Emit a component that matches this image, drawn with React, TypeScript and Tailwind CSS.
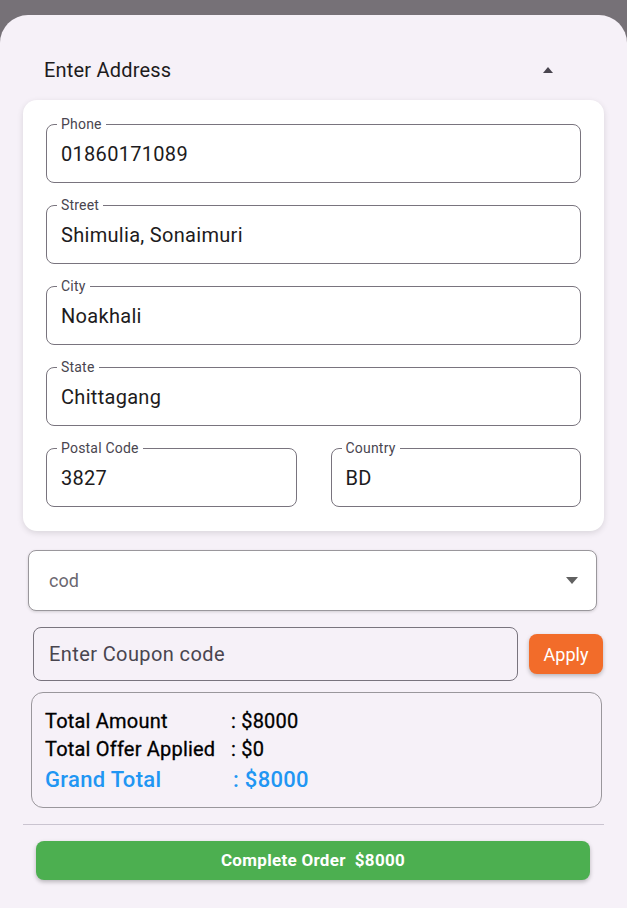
import React from 'react';

const font = { fontFamily: 'Roboto, "Noto Sans", sans-serif' };

function Field({ label, value, className = '' }: { label: string; value: string; className?: string }) {
    return (
        <div className={`relative h-[59px] rounded-[8px] border border-[#79747e] flex items-center pl-[14px] ${className}`}>
            <span className="absolute -top-[10px] left-[10px] px-[4px] bg-white text-[14px] leading-[18px] text-[#49454f] tracking-[0.2px]">
                {label}
            </span>
            <span className="text-[20px] text-[#1d1b20] tracking-[0.3px]">{value}</span>
        </div>
    );
}

export default function App() {
    return (
        <div className="w-[627px] h-[908px] bg-[#767177] pt-[15px] overflow-hidden" style={font}>
            <div className="h-full bg-[#f6f1f8] rounded-t-[28px] flex flex-col">
                {/* header */}
                <div className="mt-[27px] h-[56px] flex items-center justify-between pl-[44px] pr-[74px]">
                    <span className="text-[20px] text-[#1d1b20] tracking-[0.2px]">Enter Address</span>
                    <svg width="10" height="6" viewBox="0 0 10 6">
                        <path d="M0 6 L5 0 L10 6 Z" fill="#49454f" />
                    </svg>
                </div>

                {/* address card */}
                <div className="mx-[23px] mt-[2px] bg-white rounded-[14px] shadow-[0_2px_6px_rgba(0,0,0,0.12)] px-[23px] pt-[24px] pb-[24px] flex flex-col gap-[22px]">
                    <Field label="Phone" value="01860171089" />
                    <Field label="Street" value="Shimulia, Sonaimuri" />
                    <Field label="City" value="Noakhali" />
                    <Field label="State" value="Chittagang" />
                    <div className="flex gap-[34px]">
                        <Field label="Postal Code" value="3827" className="flex-1" />
                        <Field label="Country" value="BD" className="flex-1" />
                    </div>
                </div>

                {/* payment dropdown */}
                <div className="ml-[28px] mr-[30px] mt-[19px] h-[61px] bg-white rounded-[8px] border border-[#9a979c] shadow-[0_1px_3px_rgba(0,0,0,0.15)] flex items-center justify-between pl-[20px] pr-[18px]">
                    <span className="text-[18px] text-[#6b6870]">cod</span>
                    <svg width="12" height="7" viewBox="0 0 12 7">
                        <path d="M0 0 L12 0 L6 7 Z" fill="#616161" />
                    </svg>
                </div>

                {/* coupon */}
                <div className="ml-[33px] mr-[24px] mt-[16px] flex items-center gap-[11px]">
                    <div className="flex-1 h-[54px] rounded-[8px] border border-[#79747e] flex items-center pl-[15px]">
                        <span className="text-[20px] text-[#49454f] tracking-[0.4px]">Enter Coupon code</span>
                    </div>
                    <button className="w-[74px] h-[40px] rounded-[8px] bg-[#f26c2a] text-white text-[18px] shadow-[0_2px_4px_rgba(0,0,0,0.25)]">
                        Apply
                    </button>
                </div>

                {/* summary */}
                <div className="ml-[31px] mr-[25px] mt-[11px] h-[116px] rounded-[12px] border border-[#9a979c] pl-[13px] pt-[14px]">
                    <div className="flex text-[20px] leading-[28px] text-black tracking-[0.2px] [-webkit-text-stroke:0.3px_black]">
                        <span className="w-[186px]">Total Amount</span>
                        <span>: $8000</span>
                    </div>
                    <div className="flex text-[20px] leading-[28px] text-black tracking-[0.2px] [-webkit-text-stroke:0.3px_black]">
                        <span className="w-[186px]">Total Offer Applied</span>
                        <span>: $0</span>
                    </div>
                    <div className="flex text-[22px] leading-[34px] font-medium text-[#2196f3] tracking-[0.3px]">
                        <span className="w-[188px]">Grand Total</span>
                        <span>: $8000</span>
                    </div>
                </div>

                {/* divider */}
                <div className="mx-[23px] mt-[16px] h-px bg-[#cac4d0]" />

                {/* complete order */}
                <button className="ml-[36px] mr-[37px] mt-[16px] h-[39px] rounded-[8px] bg-[#4caf50] text-white text-[17px] font-bold tracking-[0.3px] shadow-[0_2px_4px_rgba(0,0,0,0.25)]">
                    Complete Order&nbsp;&nbsp;$8000
                </button>
            </div>
        </div>
    );
}
